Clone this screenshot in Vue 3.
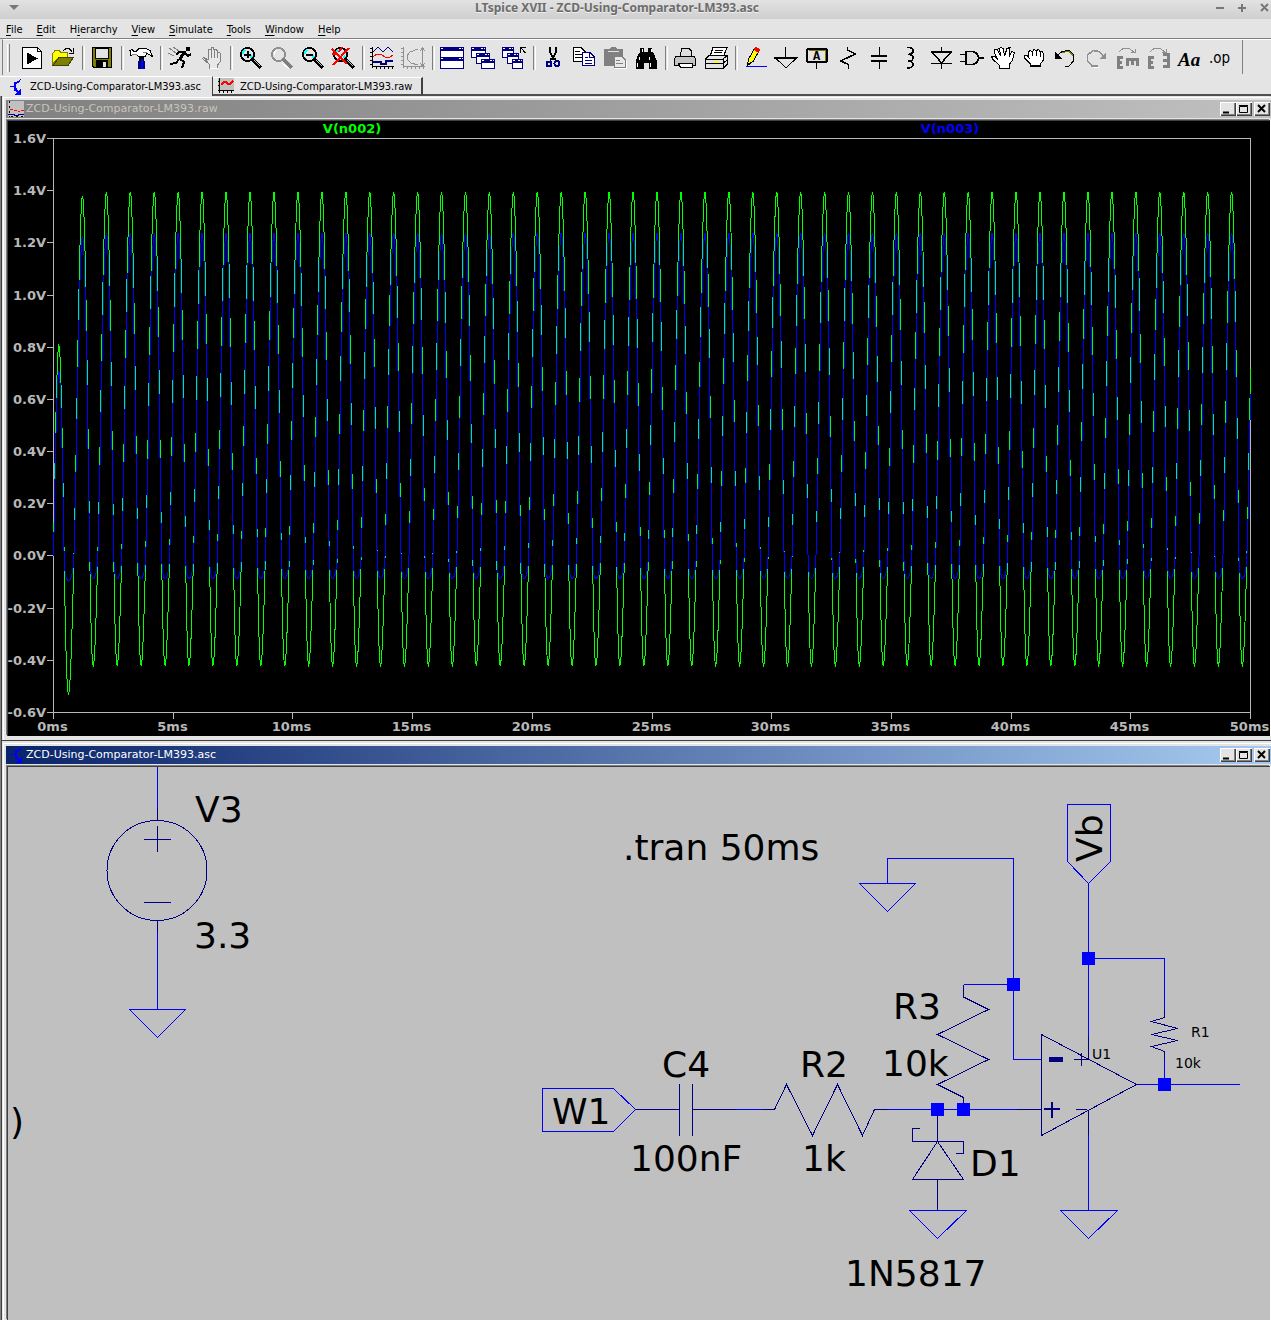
<script setup>
const menus = [
  ['', 'F', 'ile'], ['', 'E', 'dit'], ['H', 'i', 'erarchy'], ['', 'V', 'iew'],
  ['', 'S', 'imulate'], ['', 'T', 'ools'], ['', 'W', 'indow'], ['', 'H', 'elp'],
]

const lens = '<circle cx="9.5" cy="8.5" r="6.5" fill="#e4e4e4" stroke="#000" stroke-width="2"/><path d="M5 8V6L7 4M12 12l2-2" stroke="#0ff" stroke-width="2"/><path d="M14 13l9 9" stroke="#000" stroke-width="4"/><path d="M16 14l6 6" stroke="#c0c0c0"/>'
const win = (x, y, w, h) => `<rect x="${x + 0.5}" y="${y + 0.5}" width="${w - 1}" height="${h - 1}" fill="#fff" stroke="#000080"/><path d="M${x} ${y + 2}h${w}" stroke="#000080" stroke-width="4"/><path d="M${x + 1} ${y + 1.5}h2M${x + w - 5} ${y + 1.5}h2M${x + w - 2} ${y + 1.5}h1" stroke="#fff"/>`
const axes = (c) => `<path d="M2.5 1V22M2 20.5H24" stroke="${c}"/><path d="M0 2.5h2M0 6.5h2M0 10.5h2M0 14.5h2M0 18.5h2M6.500 21v2M10.500 21v2M14.500 21v2M18.500 21v2M22.500 21v2" stroke="${c}"/>`

const groups = [
  [
    ['Run', '<path d="M2.500 1.500H17.500L21.500 5.500V22.500H2.500Z" fill="#fff" stroke="#000"/><path d="M17.500 1.500V5.500H21.500" stroke="#000"/><path d="M7 6.500L18 12.500L7 18.500Z" fill="#000"/>'],
    ['Open', '<path d="M1.500 18V7.500L4 4.500H8L10 6.500H16.500V11H8Z" fill="#ff0" stroke="#808000"/><path d="M2 19.500L8 11.500H22.500L17 19.500Z" fill="#808000" stroke="#404000"/><path d="M12.500 4.500L15 2.500H18L21 5.500M22.500 2V7.500H17.500" stroke="#000"/>'],
  ],
  [['Save', '<path d="M2.500 1.500H21.500V21.500H4L2.500 20Z" fill="#808000" stroke="#000"/><path d="M5.500 2H18.500V12.500H5.500Z" fill="#e4e4e4" stroke="#000"/><path d="M6 14H18V21H6Z" fill="#000"/><path d="M13 16h3v5h-3z" fill="#e4e4e4"/>']],
  [['Control panel', '<path d="M1 4.500L3 3.500L5 5.500H7L10 2.500H17L21 4.500L23.500 10.500L18 7.500L16 10.500H10L7 8.500H4L2 9.500Z" fill="#fff" stroke="#000"/><path d="M3 8.500H8M14 6.500H18" stroke="#808080"/><path d="M10 11h5v4h-5z" fill="#000"/><path d="M9 15h7v8h-7z" fill="#000080"/><path d="M12 13h2v10h-2z" fill="#00f"/>']],
  [
    ['Simulate', '<path d="M18 1h4v4h-4z" fill="#000"/><path d="M17 5L12 13" stroke="#000" stroke-width="3"/><path d="M16 6H11L8 9M17 7L20 10L23 8M12 13L16 16L14 22M11 13L8 17L2 18" stroke="#000" stroke-width="2"/><path d="M1 2L8 7M5 1L11 5M0 7L6 10" stroke="#808080"/>'],
    ['Halt', '<path d="M9 14V4.500L10 3H12V1.500H14.500V3H17L18.500 5V6H20L21.500 7.500V15L18 20V22H10V18L3.500 12.500L5 11L9 14" fill="#e8e8e8" stroke="#808080"/><path d="M12.500 4V12M15.500 3V12M18.500 6v6M5 12l5 6" stroke="#808080"/><path d="M11 22.500H19" stroke="#fff"/>'],
  ],
  [
    ['Zoom in', lens + '<path d="M6 8.500h7M9.500 5v7" stroke="#000" stroke-width="2"/>'],
    ['Pan', '<circle cx="9.500" cy="8.500" r="6.500" fill="#e4e4e4" stroke="#909090" stroke-width="2"/><path d="M5 9V6L8 4" stroke="#fff"/><path d="M14 13l9 9" stroke="#808080" stroke-width="4"/><path d="M13 17l7 6" stroke="#fff"/>'],
    ['Zoom out', lens + '<path d="M6 8.500h7" stroke="#000" stroke-width="2"/>'],
    ['Zoom to fit', lens + '<path d="M1 3L16 18M18 2L2 19M1 7.500L8 9M11 1L8 6" stroke="#f00" stroke-width="2"/>'],
  ],
  [
    ['Autorange', axes('#000') + '<path d="M3 6L8 1L13 6L18 1L23 6" stroke="#000080"/><path d="M3 11L7 8H11L15 11H20L23 9" stroke="#f00"/><path d="M3 15.500H11V17.500H16V14.500H23" stroke="#000080" stroke-width="2"/>'],
    ['Setup waveform', axes('#909090') + '<path d="M17 3L9 6L6 10V13L10 17L17 19" stroke="#909090"/><path d="M21.500 2V20M19 5l2.500-3L24 5M19 17l2.500 3L24 17" stroke="#909090"/>'],
  ],
  [
    ['Tile', win(0, 1, 24, 11) + win(0, 11, 24, 12)],
    ['Cascade', win(0, 1, 15, 11) + win(5, 7, 14, 11) + win(10, 13, 14, 10)],
    ['Close all', win(0, 1, 12, 11) + win(5, 7, 12, 11) + win(10, 13, 11, 10) + '<path d="M18.500 7V1.500H24M19 2L23.500 7" stroke="#000"/>'],
  ],
  [
    ['Cut', '<path d="M9 1V6L12 12L15 14M15 1V6L12 12L9 14" stroke="#000" stroke-width="2"/><circle cx="8" cy="18" r="2.500" stroke="#000080" stroke-width="2"/><circle cx="16" cy="17.500" r="2.500" stroke="#000080" stroke-width="2"/>'],
    ['Copy', '<path d="M1.500 1.500H9L13.500 6V15.500H1.500Z" fill="#fff" stroke="#000"/><path d="M3 5.500h5M3 8.500h7M3 11.500h7" stroke="#000"/><path d="M10.500 6.500H18L22.500 11V19.500H10.500Z" fill="#fff" stroke="#000080"/><path d="M17.500 7v4h5M13 11.500h3M13 14.500h7M13 17h7" stroke="#000080"/>'],
    ['Paste', '<path d="M1 3H7L8 1H12L14 3H20V20H1Z" fill="#808080"/><path d="M5 5.500H16" stroke="#e4e4e4"/><path d="M11.500 10.500H19L22.500 14V21.500H11.500Z" fill="#e8e8e8" stroke="#808080"/><path d="M13 14.500h4M13 17.500h7" stroke="#808080"/><path d="M12 22.500H23.500V14" stroke="#fff"/>'],
    ['Find', '<path d="M6 2h4v4h4V2h4v4l2 2 3 7v8h-8v-6h-5v6H2v-8l2-7 2-2z" fill="#000"/><path d="M8 3v3M17 3v3M5.500 11v3M15.500 11v3M3.500 17v4M16.500 17v4" stroke="#fff"/>'],
  ],
  [
    ['Print preview', '<path d="M7.500 10L8.500 2.500H16L18.500 5V10" fill="#ddd" stroke="#000"/><path d="M3 10.500H21L22.500 13V19.500H1.500V13Z" fill="#c4c4c4" stroke="#000"/><path d="M5.500 17.500H19V21.500H7.500Z" fill="#fff" stroke="#000"/>'],
    ['Print', '<path d="M6.500 9L9 1.500H23L20 9Z" fill="#fff" stroke="#000"/><path d="M11 4.500h8M10 6.500h8" stroke="#000"/><path d="M1.500 13L5 9.500H23.500V18L19 22.500H1.500ZM1.500 13.500H19V22M19 13L23 10M2 17.500H19L23 14" fill="#e4e4e4" stroke="#000"/><path d="M10 15.500h5" stroke="#ff0" stroke-width="2"/>'],
  ],
  [
    ['Wire', '<path d="M4.500 19L5.500 13L11 3.500L15.500 6L10 15.500Z" fill="#ff0" stroke="#000"/><path d="M4 20v-4l4 2z" fill="#000"/><path d="M11 2l2-1 4 2-1 4-5-3z" fill="#f00"/><path d="M3 20.500H24" stroke="#00f"/>'],
    ['Ground', '<path d="M11.500 1V11M1 11.500H23L12 22Z" stroke="#000"/><path d="M0 12H23" stroke="#000" stroke-width="2"/>'],
    ['Label net', '<rect x="2" y="3" width="20" height="13" rx="2" stroke="#000" stroke-width="2"/><path d="M3.500 4.500H20.500V15" stroke="#808000"/><path d="M11.500 17V23" stroke="#000"/><text x="8" y="14" class="bold-glyph">A</text>'],
    ['Resistor', '<path d="M11.500 1V4L19.500 8L4.500 15L12.500 18.500V23" stroke="#000" stroke-width="1.500"/>'],
    ['Capacitor', '<path d="M12 1V9M12 16V23" stroke="#000"/><path d="M4 10H20M4 15H20" stroke="#000" stroke-width="2"/>'],
    ['Inductor', '<path d="M9 1.500C17 1 17 8 10 8.500C17 8 17 15.500 10 15C17 15 17 22 9 22" stroke="#000" stroke-width="1.500"/>'],
    ['Diode', '<path d="M12.500 1V6M12.500 18V23M2 6H23M4 7L12.500 17L21 7M2 17.500H23" stroke="#000" stroke-width="1.500"/>'],
    ['Component', '<path d="M6 5.500H12Q18 6 18.500 12Q18 18 12 18.500H6Z" fill="#ddd" stroke="#000" stroke-width="1.500"/><path d="M0 8.500H6M0 15.500H6M18 12H24" stroke="#000" stroke-width="1.500"/>'],
    ['Move', '<path d="M8 22.500V19L2 13.500L0.500 10.500H4L7 14L3 5.500V3.500H6L10 10L8 2.500L10 1.500L12.500 3L13.500 10L16 2.500L19 1.500L18 11L21 5.500L23.500 6.500L21.500 14L18 19V22.500Z" fill="#fff" stroke="#000"/>'],
    ['Drag', '<path d="M8 20.500V17.500L3 12.500L2.500 9.500H5L7 12L6.500 6L8 4.500L10.500 5.500L12 3.500L14.500 4.500L16.500 3.500L18 5.500H20.500L21.500 8V14L18.500 18V20.500Z" fill="#fff" stroke="#000"/><path d="M10.500 6v4M14.500 5v5M18 6v5M8 19.500h10" stroke="#000"/>'],
    ['Undo', '<path d="M5 9L9 5.500L16 4.500L20.500 9V15L16 20H12" stroke="#000"/><path d="M9 6.500L16 5.500L20 9.500" stroke="#808000"/><path d="M2 6V13H9Z" fill="#000"/>'],
    ['Redo', '<path d="M19 9L15 5.500L9 4.500L3.500 9V15L8 20H14" stroke="#909090" stroke-width="1.500"/><path d="M22 6V13H15Z" fill="#909090"/><path d="M9 21.500h6" stroke="#fff"/>'],
    ['Rotate', '<path d="M4 6L8 2.500H14L19 6M20.500 3V6.500H16" stroke="#909090"/><path d="M2 11.500H8M2 16.500H7M2 21.500H8M3 10V23M11 13.500H24M12.500 14V20M17.500 14V19M22.500 14V20" stroke="#808080" stroke-width="3"/>'],
    ['Mirror', '<path d="M4 6L8 2.500H14L19 6M20.500 3V6.500H16" stroke="#909090"/><path d="M2 11.500H8M2 16.500H7M2 21.500H8M3 10V23M17 8.500H24M17 14.500H24M17 20.500H24M22.500 7V22" stroke="#808080" stroke-width="3"/>'],
    ['Text', '<text x="1" y="20" class="serif-glyph">Aa</text>'],
    ['SPICE directive', '<text x="1" y="17" class="op-glyph">.op</text>'],
  ],
]

const windowControls = [
  ['Minimize', 'M3 9.500h6', 2],
  ['Maximize', 'M3.500 3.500h8v6h-8zM3 2.500h9', 1],
  ['Close', 'M4 2l7 7M11 2l-7 7', 2],
]

// Plot frame, in the units of the drawing
const plot = { left: 53.5, right: 1250.5, top: 138.5, bottom: 712.5 }
const xOf = (ms) => plot.left + (ms / 50) * (plot.right - plot.left)
const yOf = (v) => plot.top + ((1.6 - v) / 2.2) * (plot.bottom - plot.top)

const yTicks = Array.from({ length: 12 }, (_, i) => {
  const v = 1.6 - i * 0.2
  return { y: Math.floor(yOf(v)) + 0.5, label: (Math.abs(v) < 0.01 ? 0 : v).toFixed(1) + 'V' }
})
const xTicks = Array.from({ length: 11 }, (_, i) => ({ x: Math.floor(xOf(i * 5)) + 0.5, label: i * 5 + 'ms' }))

// Transient run: 1 kHz source, 100 nF in series, 1k into 10k with a Schottky clamp
function transient() {
  const dt = 2e-6
  const input = []
  const clamp = []
  let vc = 0
  let b = 0
  for (let n = 0; n <= 25000; n++) {
    const t = n * dt
    const a = 0.988 * Math.sin(2 * Math.PI * 1000 * t) - vc
    for (let k = 0; k < 4; k++) {
      const e = 3.17e-5 * Math.exp(-b / 0.0355)
      const f = (a - b) / 1000 - b / 10000 + e - 3.17e-5
      b += f / (0.0011 + e / 0.0355)
    }
    vc += ((a - b) / 1000) * (dt / 1e-7)
    if (n % 10 === 0) {
      const x = xOf(t * 1000).toFixed(2)
      input.push(`${x},${yOf(a).toFixed(2)}`)
      clamp.push(`${x},${yOf(b).toFixed(2)}`)
    }
  }
  return { input: input.join(' '), clamp: clamp.join(' ') }
}
const traces = transient()

const labels = [
  [195, 822, 'V3'], [194, 948, '3.3'], [623, 860, '.tran 50ms'], [552, 1124, 'W1'],
  [662, 1077, 'C4'], [630, 1171, '100nF'], [800, 1077, 'R2'], [802, 1171, '1k'],
  [893, 1019, 'R3'], [882, 1076, '10k'], [970, 1176, 'D1'], [845, 1286, '1N5817'], [10, 1134, ')'],
]
const smallLabels = [[1092, 1059, 'U1'], [1191, 1037, 'R1'], [1175, 1068, '10k']]
const junctions = [[1088, 958], [1013, 984], [937, 1109], [963, 1109], [1164, 1084]]
</script>

<template>
  <div class="app">
    <header class="caption">
      <svg width="10" height="6"><path d="M0 0H10L5 5Z" fill="#777" /></svg>
      <h1>LTspice XVII - ZCD-Using-Comparator-LM393.asc</h1>
      <svg width="56" height="10" fill="none" stroke="#777" stroke-width="2">
        <path d="M1 5H9M23 5H31M27 1V9M46 1L53 8M53 1L46 8" />
      </svg>
    </header>

    <nav class="menubar">
      <button v-for="m in menus" :key="m.join('')" type="button">{{ m[0] }}<u>{{ m[1] }}</u>{{ m[2] }}</button>
    </nav>

    <div class="toolbar" role="toolbar" aria-label="Main">
      <span class="grip"></span>
      <template v-for="(group, g) in groups" :key="g">
        <span v-if="g" class="separator"></span>
        <button v-for="[name, art] in group" :key="name" type="button" :aria-label="name">
          <svg width="24" height="24" viewBox="0 0 24 24" fill="none" v-html="art"></svg>
        </button>
      </template>
      <span class="toolbar-end"></span>
    </div>

    <div class="tabs" role="tablist">
      <button type="button" class="tab active" role="tab" aria-selected="true">
        <svg width="16" height="16" viewBox="0 0 16 16" fill="none" stroke="#00f" shape-rendering="crispEdges">
          <path d="M1 7.500H5M9 4L12 0M6 10L10 14" /><path d="M5.500 3V12M5 5L9 3M6 9L9 13" stroke-width="2" /><path d="M11 11V15H7Z" fill="#00f" />
        </svg>
        <span>ZCD-Using-Comparator-LM393.asc</span>
      </button>
      <button type="button" class="tab other" role="tab" aria-selected="false">
        <svg width="16" height="16" viewBox="0 0 16 16" fill="none" shape-rendering="crispEdges">
          <path d="M0 0H16V12H0Z" fill="#c0c0c0" /><path d="M1.500 0V15M0 12.500H16M5.500 12V15M9.500 12V15M13.500 12V15M0 3.500H2M0 7.500H2" stroke="#000" /><path d="M3 7L6 4H8L10 6H12L15 3" stroke="#f00" stroke-width="2" />
        </svg>
        <span>ZCD-Using-Comparator-LM393.raw</span>
      </button>
      <span class="tab-line"></span>
    </div>

    <main class="workspace">
      <section class="window inactive">
        <header class="titlebar">
          <svg width="16" height="16" viewBox="0 0 16 16" fill="none" shape-rendering="crispEdges">
            <path d="M0 0H16V16H0Z" fill="#c0c0c0" /><path d="M1.500 0V16M3 15.500H16" stroke="#000" stroke-dasharray="2 3" /><path d="M2 8.500H5M6 9.500H9M10 10.500H12M13 9.500H16" stroke="#f00" /><path d="M0 13.500H6V14.500H10V13.500H16" stroke="#000080" />
          </svg>
          <h2>ZCD-Using-Comparator-LM393.raw</h2>
          <button v-for="[name, d, w] in windowControls" :key="name" type="button" :aria-label="name">
            <svg width="14" height="12" fill="none" stroke="#000" :stroke-width="w"><path :d="d" /></svg>
          </button>
        </header>
        <div class="client plot">
          <svg viewBox="8 121 1262 615" role="img" aria-label="Waveform plot">
            <g fill="none" shape-rendering="crispEdges">
              <rect :x="plot.left" :y="plot.top" :width="plot.right - plot.left" :height="plot.bottom - plot.top" stroke="#b8b8b8" />
              <path v-for="t in yTicks" :key="t.label" :d="`M47 ${t.y}H53`" stroke="#b8b8b8" />
              <path v-for="t in xTicks" :key="t.label" :d="`M${t.x} 713V719`" stroke="#b8b8b8" />
              <polyline :points="traces.input" stroke="#0f0" />
              <polyline :points="traces.clamp" stroke="#00f" />
            </g>
            <g class="axis">
              <text v-for="t in yTicks" :key="t.label" x="46" :y="t.y + 4.5" text-anchor="end">{{ t.label }}</text>
              <text v-for="t in xTicks" :key="t.label" :x="t.x - 1" y="731" text-anchor="middle">{{ t.label }}</text>
              <text x="352" y="133" text-anchor="middle" fill="#0f0">V(n002)</text>
              <text x="950" y="133" text-anchor="middle" fill="#00f">V(n003)</text>
            </g>
          </svg>
        </div>
      </section>

      <section class="window">
        <header class="titlebar">
          <svg width="16" height="16" viewBox="0 0 16 16" fill="none" stroke="#00f" shape-rendering="crispEdges">
            <path d="M3 7.500H7M11 4L14 0M8 10L12 14" /><path d="M7.500 3V12M7 5L11 3M8 9L11 13" stroke-width="2" /><path d="M13 11V15H9Z" fill="#00f" />
          </svg>
          <h2>ZCD-Using-Comparator-LM393.asc</h2>
          <button v-for="[name, d, w] in windowControls" :key="name" type="button" :aria-label="name">
            <svg width="14" height="12" fill="none" stroke="#000" :stroke-width="w"><path :d="d" /></svg>
          </button>
        </header>
        <div class="client schematic">
          <svg viewBox="8 767 1262 553" role="img" aria-label="Circuit schematic">
            <g fill="none" shape-rendering="crispEdges" stroke="#00f">
              <path d="M157.500 767V808M157.500 933V1009.500M129.500 1009.500H185.500L157.500 1037.500Z" />
              <path d="M887.500 883.500V858.500H1013.500V1059.500H1041M859.500 883.500H915.500L887.500 911.500Z" />
              <path d="M1067.500 804.500H1110.500V861.500L1088.500 883.500L1067.500 861.500ZM1088.500 883V1036M1088.500 958.500H1164.500V1010M1164.500 1059V1084.500M1139 1084.500H1240" />
              <path d="M963.500 984.500H1013M887 1109.500H1017M1088.500 1135V1210.500M1060.500 1210.500H1117.500L1088.500 1238.500Z" />
              <path d="M909.500 1210.500H966.500L937.500 1238.500Z" />
              <path d="M542.500 1088.500H613.500L635.500 1109.500L613.500 1131.500H542.500ZM736 1109.500H762" />
            </g>
            <g fill="none" shape-rendering="crispEdges" stroke="#000080">
              <circle cx="157" cy="870.500" r="50" />
              <path d="M157.500 808V820M144 839.500H171M157.500 826V852M144 902.500H171M157.500 920V933" />
              <path d="M635 1109.500H679.500M679.500 1084V1136M692.500 1084V1136M692.500 1109.500H736M762 1109.500H774.500L786.500 1084.500L812.500 1135.500L837.500 1084.500L862.500 1135.500L874.500 1109.500H887" />
              <path d="M963.500 984.500V997L988.500 1009.500L937.500 1034.500L988.500 1059.500L937.500 1084.500L963.500 1097.500V1109" />
              <path d="M937.500 1115V1141.500L912.500 1179.500H963.500L937.500 1141.500M937.500 1179.500V1210M919.500 1128.500H912.500V1141.500H963.500V1153.500H956" />
              <path d="M1041.500 1034.500V1135.500L1136.500 1084.500ZM1017 1109.500H1041M1136 1084.500H1140M1088.500 1036V1060M1088.500 1110V1135" />
              <path d="M1164.500 1010V1017.500L1151.500 1021.500L1177.500 1028.500L1151.500 1034.500L1177.500 1040.500L1151.500 1046.500L1164.500 1051.500V1059" />
              <path d="M1074 1059.500H1088M1081.500 1053V1066M1076 1109.500H1087" />
              <path d="M1044 1109H1060M1052 1102V1118" stroke-width="2" />
              <rect x="1049.500" y="1057.500" width="13" height="4" fill="#000080" />
            </g>
            <rect v-for="[x, y] in junctions" :key="x" :x="x - 6" :y="y - 6" width="13" height="13" fill="#00f" />
            <g class="label">
              <text v-for="[x, y, s] in labels" :key="s" :x="x" :y="y">{{ s }}</text>
              <text transform="translate(1102 862) rotate(-90)">Vb</text>
            </g>
            <g class="label small">
              <text v-for="[x, y, s] in smallLabels" :key="s" :x="x" :y="y">{{ s }}</text>
            </g>
          </svg>
        </div>
      </section>
    </main>
  </div>
</template>

<style>
body {
  margin: 0;
  background: #e4e4e4;
}
</style>

<style scoped>
.app {
  min-height: 100vh;
  display: flex;
  flex-direction: column;
  overflow: hidden;
  background: #e4e4e4;
  font-family: "DejaVu Sans Condensed", "DejaVu Sans", sans-serif;
  font-size: 11px;
  color: #000;
}
h1, h2 { margin: 0; }
button {
  margin: 0;
  padding: 0;
  border: 0;
  background: none;
  color: inherit;
  font: inherit;
}
svg { display: block; }

.caption {
  display: flex;
  align-items: center;
  height: 19px;
  box-sizing: border-box;
  padding: 0 0 3px 9px;
  background: linear-gradient(#e2e2e2, #cfcfcf);
}
.caption h1 {
  flex: 1;
  text-align: center;
  font: bold 12px/16px "Noto Sans", sans-serif;
  color: #6c6c6c;
  text-shadow: 0 1px #eee;
}

.menubar {
  display: flex;
  align-items: flex-end;
  height: 20px;
  box-sizing: border-box;
  border-bottom: 1px solid #808080;
}
.menubar button {
  padding: 0 7px;
  line-height: 16px;
}
.menubar button:first-child { padding-left: 6px; }
.menubar u { text-underline-offset: 2px; }

.toolbar {
  display: flex;
  align-items: center;
  height: 35px;
  margin-left: 2px;
  border-top: 1px solid #fff;
  border-left: 1px solid #808080;
}
.toolbar button {
  flex: none;
  padding: 0 4px 0 3px;
}
.toolbar button svg { shape-rendering: crispEdges; }
.grip {
  width: 1px;
  height: 28px;
  margin: 0 7px 0 4px;
  border-left: 1px solid #fff;
  border-right: 1px solid #808080;
}
.separator {
  flex: none;
  width: 1px;
  height: 24px;
  margin: 0 2px 0 3px;
  border-left: 1px solid #808080;
  border-right: 1px solid #fff;
}
.toolbar-end {
  align-self: flex-start;
  height: 34px;
  margin-left: 6px;
  border-left: 1px solid #808080;
}
:deep(.bold-glyph) { font: bold 12px "Liberation Mono", monospace; fill: #000; }
:deep(.serif-glyph) { font: italic bold 19px "Liberation Serif", serif; fill: #000; }
:deep(.op-glyph) { font: 15px "DejaVu Sans Condensed", sans-serif; fill: #000; }

.tabs {
  display: flex;
  align-items: flex-end;
  height: 21px;
}
.tab {
  display: flex;
  align-items: center;
  box-sizing: border-box;
  border-top: 1px solid #fff;
}
.tab.active {
  width: 213px;
  height: 20px;
  padding-left: 9px;
  gap: 5px;
  border-right: 1px solid #404040;
}
.tab.other {
  width: 210px;
  height: 19px;
  padding-left: 5px;
  gap: 6px;
  border-right: 2px solid #404040;
  border-bottom: 2px solid #505050;
}
.tab-line {
  flex: 1;
  border-bottom: 2px solid #505050;
}

.workspace {
  flex: 1;
  display: flex;
  flex-direction: column;
  border-left: 1px solid #808080;
  box-shadow: inset 1px 0 #404040;
  padding-left: 1px;
}
.window {
  box-shadow: inset 1px 1px #e4e4e4, inset 2px 2px #fff;
  padding: 4px 0 4px 4px;
  border-bottom: 1px solid #404040;
}
.window + .window {
  margin-top: 1px;
  padding-bottom: 0;
  border-bottom: 0;
}
.titlebar {
  display: flex;
  align-items: center;
  height: 18px;
  padding-right: 1px;
  background: linear-gradient(90deg, #0a246a, #a6caf0);
  color: #fff;
}
.inactive .titlebar {
  background: linear-gradient(90deg, #808080, #c0c0c0);
  color: #c8c4bc;
}
.titlebar > svg { margin-left: 2px; }
.titlebar h2 {
  flex: 1;
  margin-left: 2px;
  font: 11px/20px "DejaVu Sans", sans-serif;
}
.titlebar button {
  width: 16px;
  height: 14px;
  color: #000;
  background: #e4e4e4;
  box-shadow: inset 1px 1px #fff, inset -1px -1px #404040, inset -2px -2px #808080;
}
.titlebar button:last-child { margin-left: 2px; }
.client {
  margin: 2px 1px 0;
  border: solid #404040;
  border-width: 1px 0 0 1px;
  box-shadow: -1px -1px #808080, 1px 0 #fff;
}
.client svg {
  width: 100%;
  height: auto;
}
.plot { background: #000; }
.schematic { background: #c0c0c0; }
.axis {
  font: bold 13px "DejaVu Sans", sans-serif;
  fill: #b8b8b8;
}
.label {
  font: 36px "DejaVu Sans", sans-serif;
  fill: #000;
}
.label.small { font-size: 14px; }
</style>
